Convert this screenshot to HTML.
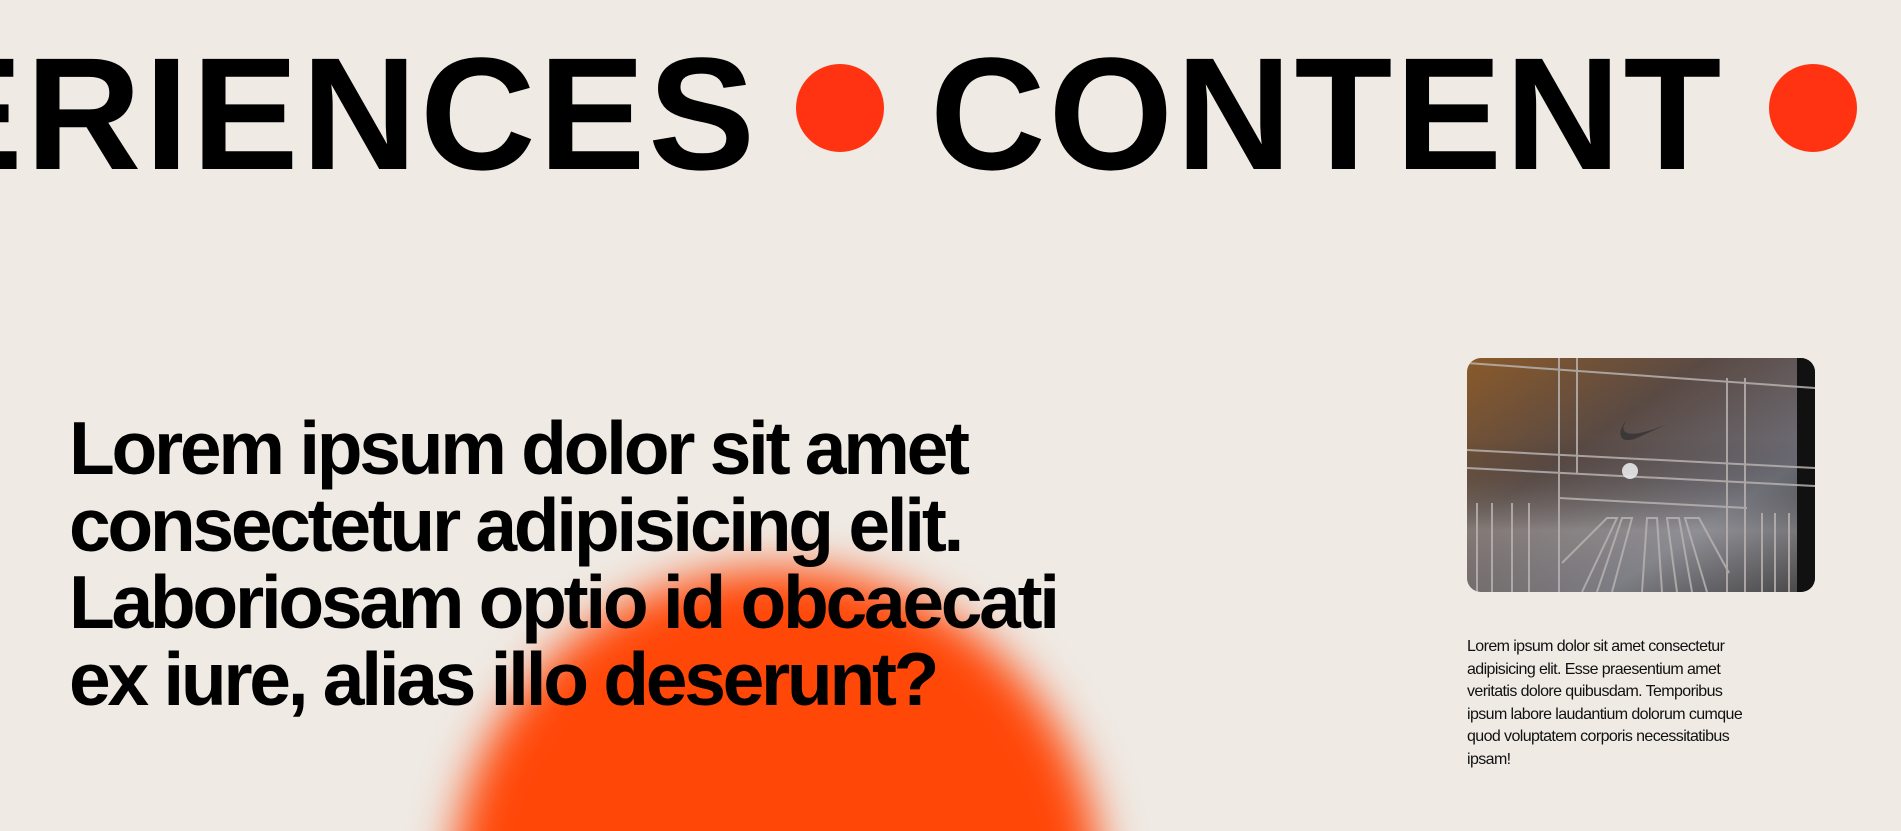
<!DOCTYPE html>
<html><head><meta charset="utf-8"><style>
html,body{margin:0;padding:0;width:1901px;height:831px;overflow:hidden}
body{background:#efeae4;position:relative;font-family:"Liberation Sans",sans-serif}
.wrap{position:absolute;left:0;top:0;width:1901px;height:831px;overflow:hidden}
.big{position:absolute;top:24px;font-weight:bold;font-size:160px;letter-spacing:3px;line-height:180px;color:#000;white-space:nowrap}
.dot{position:absolute;width:88px;height:88px;border-radius:50%;background:#ff3311;top:64px}
.blob{position:absolute;left:452px;top:568px;width:650px;height:650px;border-radius:50%;background:#ff4708;filter:blur(22px)}
h1{position:absolute;left:69px;top:410px;margin:0;font-size:75px;line-height:77px;letter-spacing:-3.3px;font-weight:bold;color:#000;width:1100px}
.photo{position:absolute;left:1467px;top:358px;width:348px;height:234px;border-radius:14px;overflow:hidden}
p{position:absolute;left:1467px;top:636px;margin:0;white-space:nowrap;font-size:16px;line-height:22.6px;color:#111;letter-spacing:-0.6px}
</style></head><body><div class="wrap">
<div class="blob"></div>
<div class="big" style="right:1143px">EXPERIENCES</div>
<div class="dot" style="left:796px"></div>
<div class="big" style="left:930px">CONTENT</div>
<div class="dot" style="left:1769px"></div>
<h1>Lorem ipsum dolor sit amet<br>consectetur adipisicing elit.<br>Laboriosam optio id obcaecati<br>ex iure, alias illo deserunt?</h1>
<div class="photo">
<svg width="348" height="234" viewBox="0 0 348 234">
<defs>
<linearGradient id="g" x1="0" y1="0" x2="1" y2="1">
<stop offset="0" stop-color="#8a5a2a"/><stop offset="0.35" stop-color="#5a4a44"/><stop offset="0.7" stop-color="#6e6e78"/><stop offset="1" stop-color="#222"/>
</linearGradient>
<linearGradient id="b" x1="0" y1="0" x2="0" y2="1">
<stop offset="0" stop-color="#000" stop-opacity="0"/><stop offset="0.6" stop-color="#ccc" stop-opacity="0.35"/><stop offset="1" stop-color="#999" stop-opacity="0.3"/>
</linearGradient>
</defs>
<rect width="348" height="234" fill="url(#g)"/>
<rect x="0" y="80" width="348" height="154" fill="url(#b)"/>
<rect x="330" y="0" width="18" height="234" fill="#111"/>
<g stroke="#b8b2b0" stroke-width="2" fill="none" opacity="0.85">
<line x1="0" y1="5" x2="348" y2="30"/>
<line x1="0" y1="92" x2="348" y2="110"/>
<line x1="0" y1="110" x2="348" y2="128"/>
<line x1="92" y1="140" x2="280" y2="150"/>
<line x1="92" y1="0" x2="92" y2="234"/><line x1="110" y1="0" x2="110" y2="115"/>
<line x1="260" y1="20" x2="260" y2="234"/><line x1="278" y1="20" x2="278" y2="234"/>
<line x1="10" y1="145" x2="10" y2="234"/><line x1="25" y1="145" x2="25" y2="234"/><line x1="45" y1="145" x2="45" y2="234"/><line x1="62" y1="145" x2="62" y2="234"/>
<line x1="295" y1="155" x2="295" y2="234"/><line x1="308" y1="155" x2="308" y2="234"/><line x1="322" y1="155" x2="322" y2="234"/>
<path d="M95 205 L140 160 L150 160 L115 234 M130 234 L155 160 L165 160 L145 234 M175 234 L180 160 L190 160 L195 234 M210 234 L200 160 L212 160 L225 234 M240 234 L218 160 L232 160 L262 215"/>
</g>
<path d="M160 62 C150 75 160 83 200 66 L170 80 C150 88 150 72 160 62Z" fill="#333" opacity="0.8"/>
<circle cx="163" cy="113" r="8" fill="#e8e8ea" opacity="0.9"/>
</svg>
</div>
<p>Lorem ipsum dolor sit amet consectetur<br>adipisicing elit. Esse praesentium amet<br>veritatis dolore quibusdam. Temporibus<br>ipsum labore laudantium dolorum cumque<br>quod voluptatem corporis necessitatibus<br>ipsam!</p>
</div></body></html>
